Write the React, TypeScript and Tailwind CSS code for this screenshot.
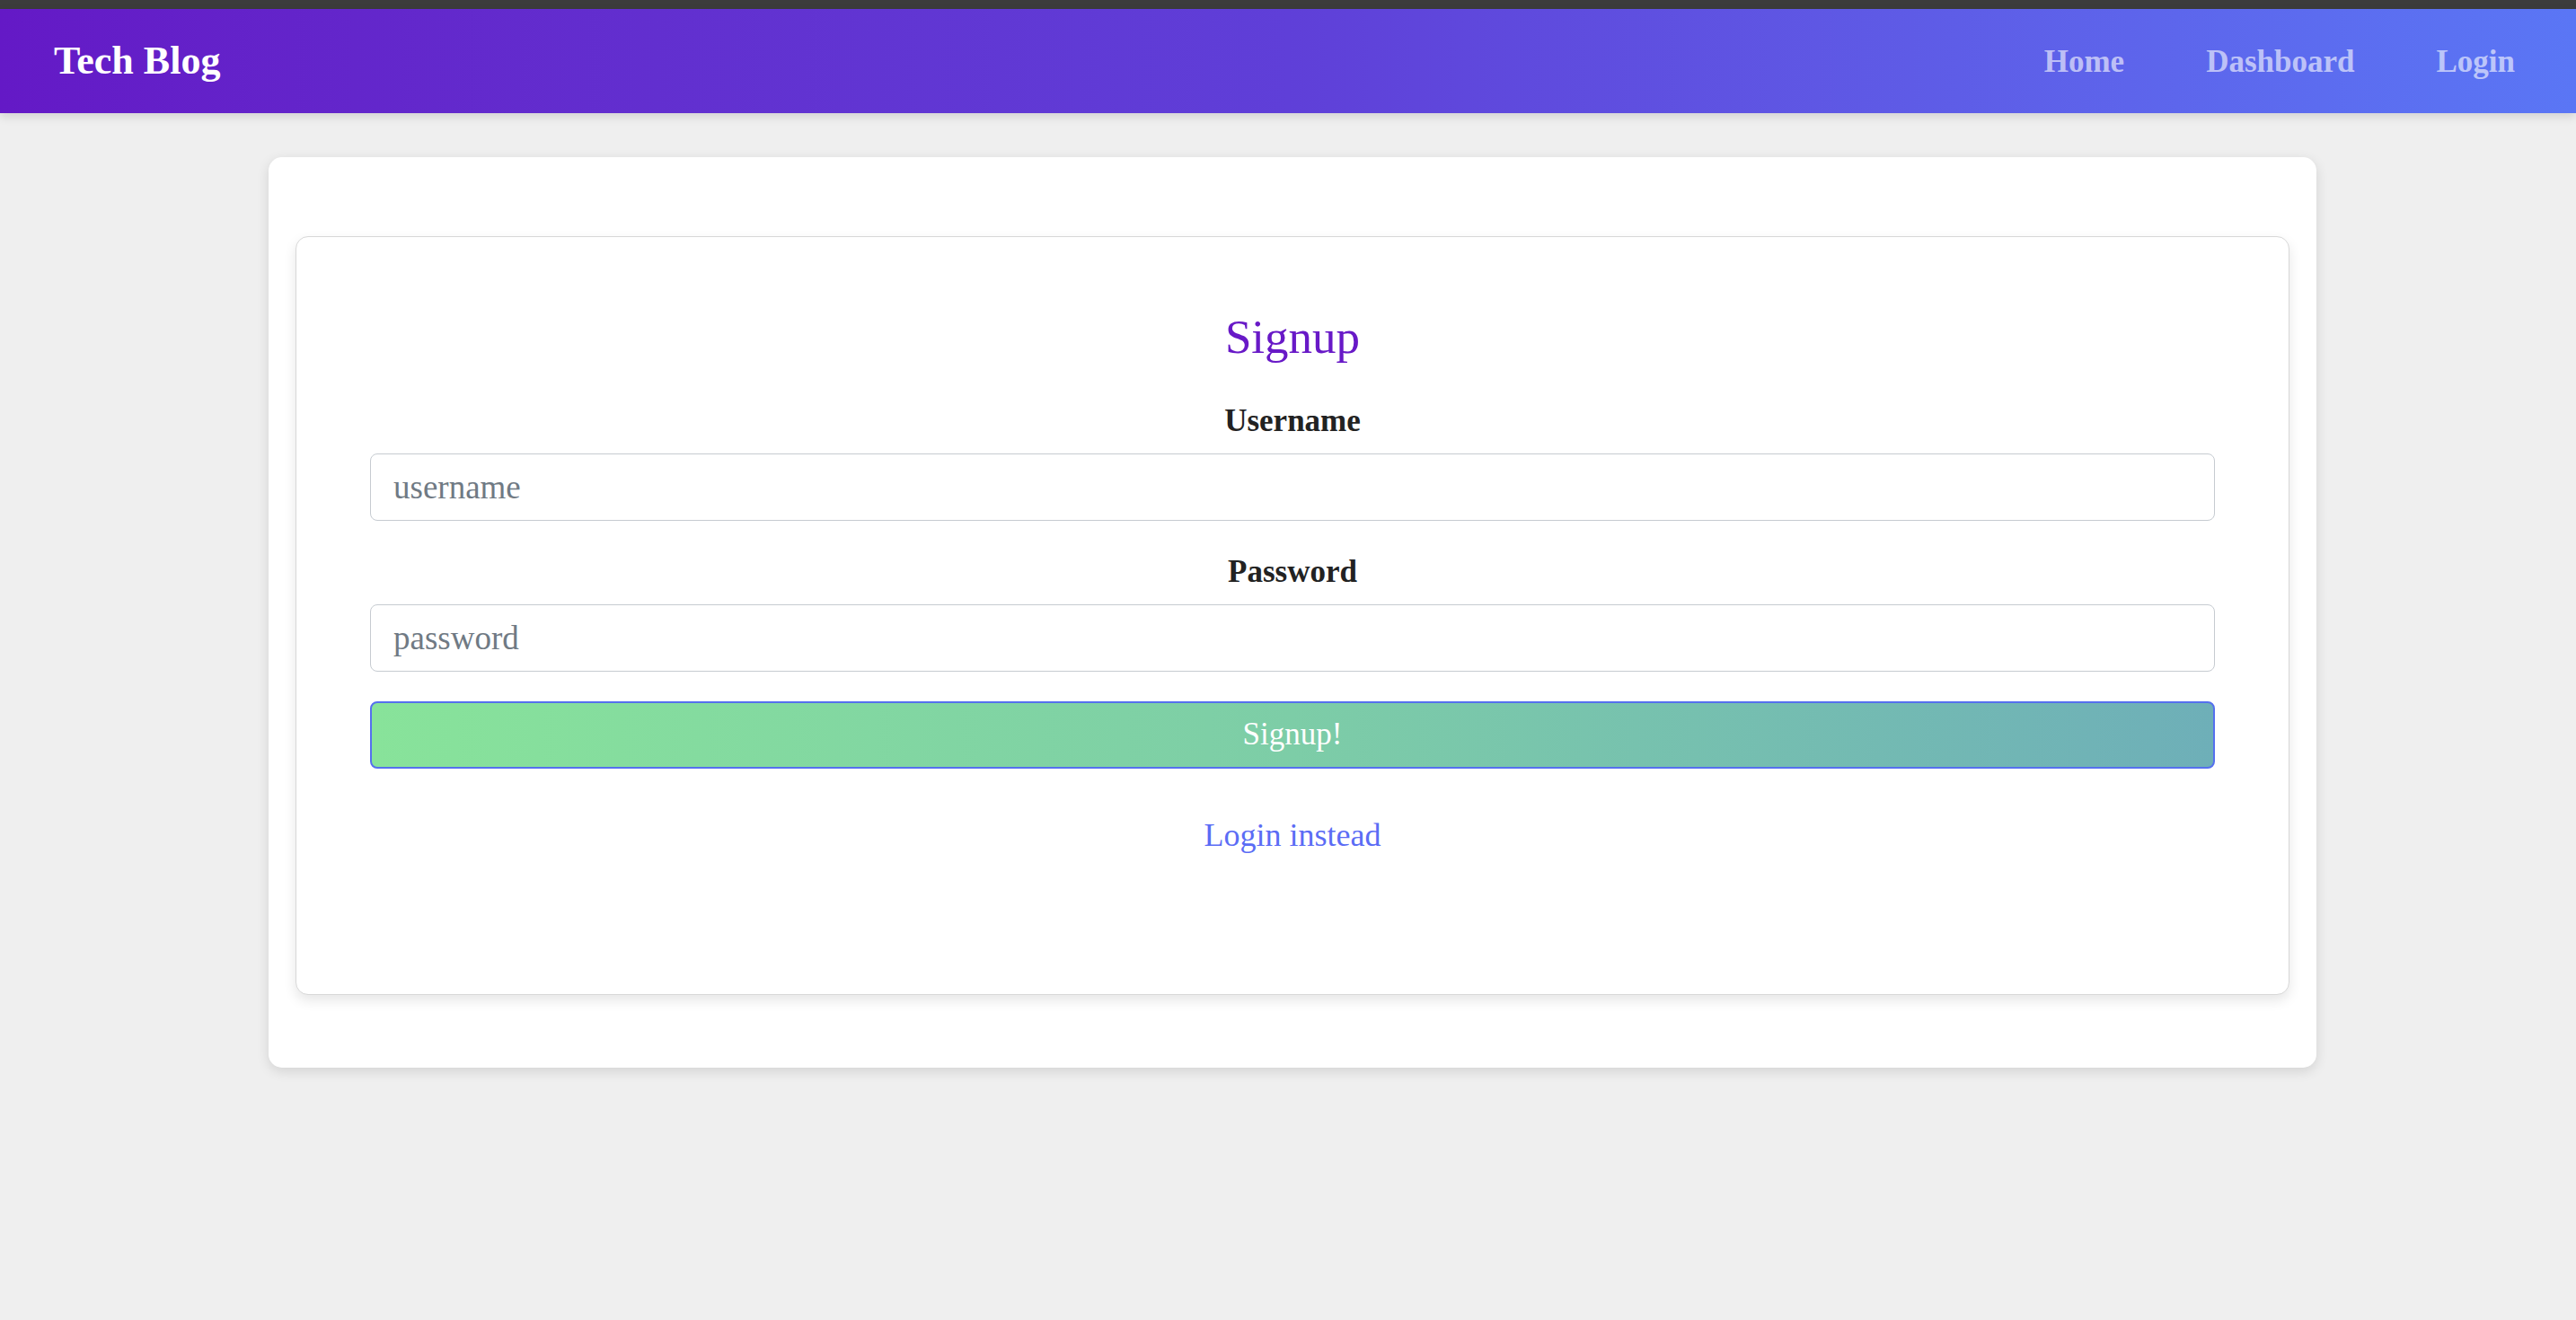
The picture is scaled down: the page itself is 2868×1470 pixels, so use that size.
import { useState } from "react";

const navLinks = ["Home", "Dashboard", "Login"];

export default function App() {
    const [username, setUsername] = useState("");
    const [password, setPassword] = useState("");

    return (
        <div className="min-h-screen bg-[#efefef] font-['Liberation_Serif',serif]">
            {/* browser strip at the very top */}
            <div className="h-[10px] bg-[#3c3c3c]" />

            <header className="flex h-[116px] items-center justify-between bg-linear-to-r from-[#6419c6] via-[#5f3fd8] to-[#5a76f5] pl-[60px] pr-[68px] shadow-[0_4px_10px_rgba(0,0,0,0.12)]">
                <a href="#" className="text-[44px] font-bold leading-none text-white">
                    Tech Blog
                </a>
                <nav className="flex items-center gap-[91px]">
                    {navLinks.map((link) => (
                        <a
                            key={link}
                            href="#"
                            className="text-[35px] font-bold leading-none text-white/60"
                        >
                            {link}
                        </a>
                    ))}
                </nav>
            </header>

            <main className="ml-[299px] mt-[49px] w-[2280px] rounded-[15px] bg-white px-[30px] pb-[81px] pt-[88px] shadow-[0_4px_14px_rgba(0,0,0,0.12)]">
                <div className="rounded-[14px] border border-[#d8d8d8] bg-white px-[82px] pb-[156px] pt-[81px] shadow-[0_6px_14px_rgba(0,0,0,0.1)]">
                    <h2 className="text-center text-[53px] leading-[60px] text-[#6819c7]">Signup</h2>

                    <form
                        className="flex flex-col"
                        onSubmit={(e) => e.preventDefault()}
                    >
                        <label
                            htmlFor="username"
                            className="mt-[44px] text-center text-[35px] font-bold leading-[40px] text-[#222]"
                        >
                            Username
                        </label>
                        <input
                            id="username"
                            type="text"
                            placeholder="username"
                            value={username}
                            onChange={(e) => setUsername(e.target.value)}
                            className="mt-[16px] h-[75px] w-full rounded-[8px] border border-[#c6cbd1] px-[25px] text-[37px] text-[#333] outline-none placeholder:text-[#707a84]"
                        />

                        <label
                            htmlFor="password"
                            className="mt-[37px] text-center text-[35px] font-bold leading-[40px] text-[#222]"
                        >
                            Password
                        </label>
                        <input
                            id="password"
                            type="password"
                            placeholder="password"
                            value={password}
                            onChange={(e) => setPassword(e.target.value)}
                            className="mt-[16px] h-[75px] w-full rounded-[8px] border border-[#c6cbd1] px-[25px] text-[37px] text-[#333] outline-none placeholder:text-[#707a84]"
                        />

                        <button
                            type="submit"
                            className="mt-[33px] h-[75px] w-full rounded-[8px] border-2 border-[#5570ee] bg-linear-to-r from-[#88e39a] via-[#7dcda7] to-[#6eafb8] text-[35px] text-white"
                        >
                            Signup!
                        </button>
                    </form>

                    <div className="mt-[53px] text-center">
                        <a href="#" className="text-[36px] leading-[42px] text-[#5b6cf5]">
                            Login instead
                        </a>
                    </div>
                </div>
            </main>
        </div>
    );
}
